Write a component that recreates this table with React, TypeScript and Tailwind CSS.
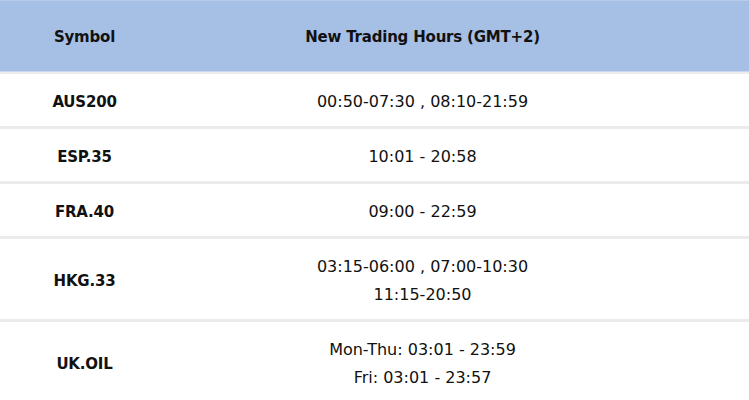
import React from 'react';

type Row = { symbol: string; hours: string[] };

const rows: Row[] = [
  { symbol: 'AUS200', hours: ['00:50-07:30 , 08:10-21:59'] },
  { symbol: 'ESP.35', hours: ['10:01 - 20:58'] },
  { symbol: 'FRA.40', hours: ['09:00 - 22:59'] },
  { symbol: 'HKG.33', hours: ['03:15-06:00 , 07:00-10:30', '11:15-20:50'] },
  { symbol: 'UK.OIL', hours: ['Mon-Thu: 03:01 - 23:59', 'Fri: 03:01 - 23:57'] },
];

export default function App() {
  return (
    <div
      className="w-[749px] h-[400px] overflow-hidden bg-white text-[#111]"
      style={{ fontFamily: "'DejaVu Sans', Verdana, sans-serif" }}
    >
      {/* Header */}
      <div className="flex h-[71px] items-center border-t border-[#b9cbea] bg-[#a6bfe5] pt-[3px] text-[15px] font-bold tracking-[-0.2px]">
        <div className="w-[169px] text-center">Symbol</div>
        <div className="w-[507px] text-center">New Trading Hours (GMT+2)</div>
      </div>
      <div className="h-px bg-[#c9d7ee]" />
      <div className="h-[2px] bg-[#ececec]" />

      {rows.map((r, i) => (
        <React.Fragment key={r.symbol}>
          {i > 0 && <div className="h-[3px] bg-[#ebebeb]" />}
          <div className="flex items-center pt-[14px] pb-[10px] leading-[28px]">
            <div className="w-[169px] text-center text-[15px] font-bold tracking-[-0.2px]">
              {r.symbol}
            </div>
            <div className="w-[507px] text-center text-[16px]">
              {r.hours.map((h) => (
                <div key={h}>{h}</div>
              ))}
            </div>
          </div>
        </React.Fragment>
      ))}
    </div>
  );
}
